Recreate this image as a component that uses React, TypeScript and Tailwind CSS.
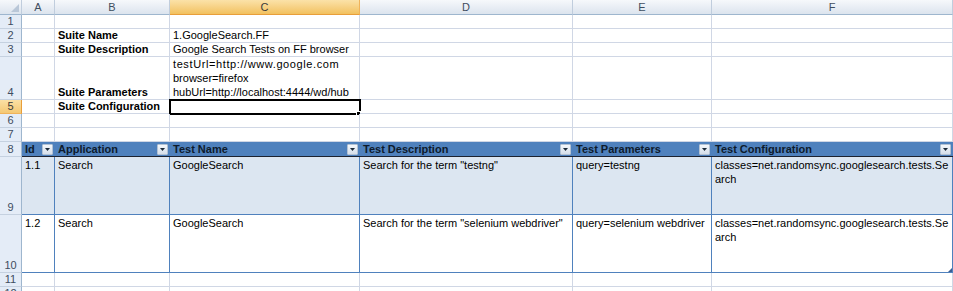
import React from "react";

const font = { fontFamily: '"Liberation Sans", Arial, sans-serif' };

const cols = ["A", "B", "C", "D", "E", "F"];

function ColHead({ label, selected }: { label: string; selected?: boolean }) {
  return (
    <div
      className={`flex items-center justify-center border-r border-b text-[11px] leading-none ${
        selected
          ? "bg-gradient-to-b from-[#fbe2a8] to-[#f2c15e] border-r-[#f0b35a] border-b-[#e89e3a] text-[#3b3b3b]"
          : "bg-gradient-to-b from-[#f6f8fb] to-[#dce4ee] border-r-[#c0cddd] border-b-[#9eb6ce] text-[#3e4d60]"
      }`}
    >
      {label}
    </div>
  );
}

function RowHead({ n, selected }: { n: number; selected?: boolean }) {
  return (
    <div
      className={`flex items-end justify-center border-r border-b text-[11px] leading-[13px] ${
        selected
          ? "bg-gradient-to-b from-[#fbe0a4] to-[#f4c873] border-r-[#e89e3a] border-b-[#f0b35a] text-[#3b3b3b]"
          : "bg-[#e4ecf7] border-r-[#9eb6ce] border-b-[#c5d1e0] text-[#3e4d60]"
      }`}
    >
      {n}
    </div>
  );
}

function Cell({
  children,
  bold,
  className = "",
}: {
  children?: React.ReactNode;
  bold?: boolean;
  className?: string;
}) {
  return (
    <div
      className={`relative flex flex-col justify-end border-r border-b border-[#d0d7e5] px-[3px] text-[11px] leading-[14px] text-black whitespace-nowrap ${
        bold ? "font-bold" : ""
      } ${className}`}
    >
      {children}
    </div>
  );
}

function Dropdown() {
  return (
    <span className="absolute right-[2px] top-[2px] flex h-[11px] w-[11px] items-center justify-center rounded-[1px] border border-[#b3c2d4] bg-gradient-to-b from-[#f4f7fb] to-[#d6dfea]">
      <svg width="5" height="3" viewBox="0 0 5 3">
        <path d="M0 0h5L2.5 3z" fill="#1c2a3a" />
      </svg>
    </span>
  );
}

function TableHead({ children }: { children: React.ReactNode }) {
  return (
    <div className="relative flex items-center border-b border-b-[#1c2230] bg-[#4f81bd] px-[3px] text-[11px] font-bold leading-none text-[#0d1a2b]">
      {children}
      <Dropdown />
    </div>
  );
}

function TableCell({
  children,
  shaded,
  last,
}: {
  children?: React.ReactNode;
  shaded?: boolean;
  last?: boolean;
}) {
  return (
    <div
      className={`relative border-r border-b border-[#4f81bd] px-[3px] pt-[1px] text-[11px] leading-[14px] text-black break-all ${
        shaded ? "bg-[#dce6f1]" : "bg-white"
      }`}
    >
      {children}
      {last && (
        <span className="absolute bottom-0 right-0 h-0 w-0 border-b-[4px] border-l-[4px] border-b-[#3a5f93] border-l-transparent" />
      )}
    </div>
  );
}

const rows = [
  {
    id: "1.1",
    app: "Search",
    name: "GoogleSearch",
    desc: 'Search for the term "testng"',
    params: "query=testng",
    config: "classes=net.randomsync.googlesearch.tests.Search",
  },
  {
    id: "1.2",
    app: "Search",
    name: "GoogleSearch",
    desc: 'Search for the term "selenium webdriver"',
    params: "query=selenium webdriver",
    config: "classes=net.randomsync.googlesearch.tests.Search",
  },
];

export default function App() {
  return (
    <div className="h-[291px] w-[953px] overflow-hidden bg-white" style={font}>
      <div className="grid grid-cols-[22px_33px_115px_190px_213px_139px_241px] grid-rows-[15px_14px_14px_14px_43px_14px_14px_14px_15px_58px_58px_14px_14px]">
        {/* column headers */}
        <div className="relative border-r border-b border-r-[#c0cddd] border-b-[#9eb6ce] bg-gradient-to-b from-[#f6f8fb] to-[#dce4ee]">
          <span className="absolute bottom-[2px] right-[2px] h-0 w-0 border-b-[8px] border-l-[8px] border-b-[#b9c7d8] border-l-transparent" />
        </div>
        {cols.map((c) => (
          <ColHead key={c} label={c} selected={c === "C"} />
        ))}

        {/* row 1 */}
        <RowHead n={1} />
        {cols.map((c) => (
          <Cell key={c} />
        ))}

        {/* row 2 */}
        <RowHead n={2} />
        <Cell />
        <Cell bold>Suite Name</Cell>
        <Cell>1.GoogleSearch.FF</Cell>
        <Cell />
        <Cell />
        <Cell />

        {/* row 3 */}
        <RowHead n={3} />
        <Cell />
        <Cell bold>Suite Description</Cell>
        <Cell>Google Search Tests on FF browser</Cell>
        <Cell />
        <Cell />
        <Cell />

        {/* row 4 */}
        <RowHead n={4} />
        <Cell />
        <Cell bold>Suite Parameters</Cell>
        <Cell>
          <span className="tracking-[0.6px]">testUrl=http://www.google.com</span>
          <span>browser=firefox</span>
          <span>hubUrl=http://localhost:4444/wd/hub</span>
        </Cell>
        <Cell />
        <Cell />
        <Cell />

        {/* row 5 */}
        <RowHead n={5} selected />
        <Cell />
        <Cell bold>Suite Configuration</Cell>
        <Cell>
          <span className="absolute -left-[1px] -top-[1px] h-[16px] w-[192px] border-2 border-black" />
          <span className="absolute -bottom-[3px] -right-[2px] h-[5px] w-[5px] border border-white bg-black" />
        </Cell>
        <Cell />
        <Cell />
        <Cell />

        {/* rows 6, 7 */}
        {[6, 7].map((n) => (
          <React.Fragment key={n}>
            <RowHead n={n} />
            {cols.map((c) => (
              <Cell key={c} />
            ))}
          </React.Fragment>
        ))}

        {/* row 8: table header */}
        <RowHead n={8} />
        <TableHead>Id</TableHead>
        <TableHead>Application</TableHead>
        <TableHead>Test Name</TableHead>
        <TableHead>Test Description</TableHead>
        <TableHead>Test Parameters</TableHead>
        <TableHead>Test Configuration</TableHead>

        {/* rows 9, 10: table data */}
        {rows.map((r, i) => (
          <React.Fragment key={r.id}>
            <RowHead n={9 + i} />
            <TableCell shaded={i === 0}>{r.id}</TableCell>
            <TableCell shaded={i === 0}>{r.app}</TableCell>
            <TableCell shaded={i === 0}>{r.name}</TableCell>
            <TableCell shaded={i === 0}>{r.desc}</TableCell>
            <TableCell shaded={i === 0}>{r.params}</TableCell>
            <TableCell shaded={i === 0} last={i === 1}>
              {r.config}
            </TableCell>
          </React.Fragment>
        ))}

        {/* rows 11, 12 */}
        {[11, 12].map((n) => (
          <React.Fragment key={n}>
            <RowHead n={n} />
            {cols.map((c) => (
              <Cell key={c} />
            ))}
          </React.Fragment>
        ))}
      </div>
    </div>
  );
}
